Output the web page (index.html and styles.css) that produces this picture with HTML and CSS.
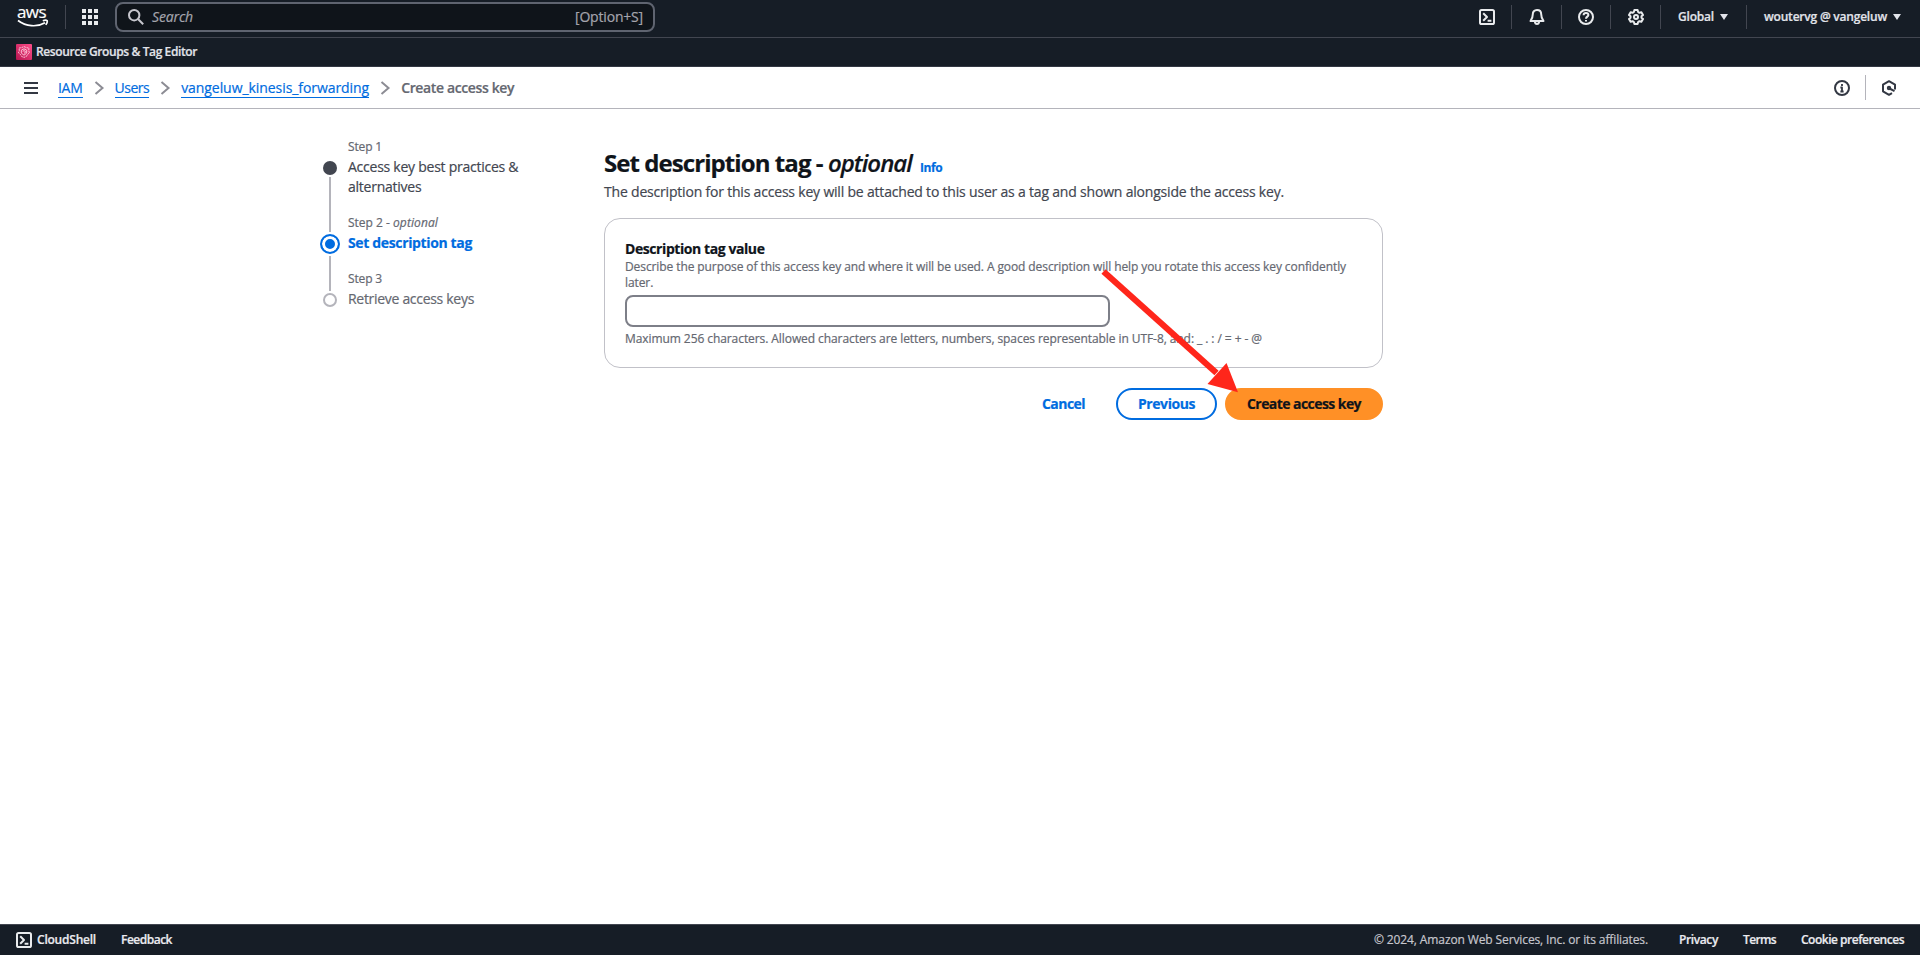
FILE: index.html
```
<!DOCTYPE html>
<html lang="en">
<head>
<meta charset="utf-8">
<title>Create access key | IAM | Global</title>
<link rel="stylesheet" href="styles.css">
</head>
<body>
<svg width="0" height="0" class="defs">
  <symbol id="shell" viewBox="0 0 16 16"><rect x="1" y="1" width="14" height="14" rx="1.6"/><path d="M4.2 4.2 8 8l-3.8 3.8M8.6 11.8h3.8"/></symbol>
  <symbol id="chevron" viewBox="0 0 16 16"><path d="m4.5 2 7 6-7 6"/></symbol>
</svg>

<header class="topnav">
  <a class="logo">
    <span class="logo-text">aws</span>
    <svg class="smile" width="32" height="9" viewBox="0 0 32 9"><path d="M1 1.5c8 6 19 7 27 2.2M25.8 1.7c1.7-.6 3.6-.7 4.2-.1.5.6 0 2.5-1.2 4.3"/></svg>
  </a>
  <i class="sep sep-logo"></i>
  <svg class="apps" width="16" height="16" viewBox="0 0 16 16"><path d="M0 0h4v4H0zM6 0h4v4H6zM12 0h4v4h-4zM0 6h4v4H0zM6 6h4v4H6zM12 6h4v4h-4zM0 12h4v4H0zM6 12h4v4H6zM12 12h4v4h-4z"/></svg>
  <div class="search">
    <svg class="icon" width="16" height="16" viewBox="0 0 16 16"><circle cx="6.2" cy="6.2" r="5.2"/><path d="m10 10 5.2 5.2"/></svg>
    <span class="search-text">Search</span>
    <span class="shortcut">[Option+S]</span>
  </div>
  <nav class="tools">
    <span class="tool"><svg class="icon" width="16" height="16"><use href="#shell"/></svg></span>
    <span class="tool"><svg class="icon" width="16" height="16" viewBox="0 0 16 16"><path d="M8 1C5.200 1 3.800 3 3.800 5.200c0 3.200-.8 4.800-2.300 6.800h13c-1.500-2-2.300-3.600-2.300-6.800C12.200 3 10.800 1 8 1zM5.800 12.300c.2 1.700 1 2.700 2.200 2.700s2-1 2.200-2.700"/></svg></span>
    <span class="tool tool-help"><svg class="icon" width="16" height="16" viewBox="0 0 16 16"><circle cx="8" cy="8" r="7"/><path d="M5.600 6.300c0-1.500 1-2.300 2.400-2.300s2.400.9 2.400 2.100C10.400 7.700 8 7.700 8 9.700M8 10.900v1.700"/></svg></span>
    <span class="tool"><svg class="icon" width="16" height="16" viewBox="0 0 16 16"><circle cx="8" cy="8" r="2"/><path d="M6.400 1h3.200l.5 2 1.300.8 2-.6 1.600 2.700L13.500 7.300v1.400l1.500 1.400-1.600 2.700-2-.6-1.300.8-.5 2H6.400l-.5-2-1.300-.8-2 .6L1 10.100l1.500-1.400V7.300L1 5.900l1.600-2.700 2 .6L5.900 3z"/></svg></span>
    <span class="menu menu-region"><span class="t-global">Global</span><i class="caret"></i></span>
    <span class="menu menu-user"><span class="t-user">woutervg @ vangeluw</span><i class="caret"></i></span>
  </nav>
</header>

<div class="favorites">
  <svg width="16" height="16" viewBox="0 0 16 16"><defs><linearGradient id="pink" x1="0" y1="1" x2="1" y2="0"><stop offset="0" stop-color="#b5144f"/><stop offset="1" stop-color="#ff4f8b"/></linearGradient></defs><rect width="16" height="16" rx="1" fill="url(#pink)"/><g fill="none" stroke="#ffd3e2" stroke-width=".9"><path d="m8 2.600 2.600 1.100 2.300.3-.2 2.800.8 2-2 1.700-1.200 2-2.300.9-2.300-.9-1.200-2-2-1.700.8-2L3.100 4l2.300-.3z" stroke-dasharray="2 .7"/><path d="M5.300 6.200 8 4.800l2.700 1.400v2.900L8 11.200 5.300 9.100z"/><path d="M6.700 7.300 8 6.600l1.300.7v1.200L8 9.300"/></g></svg>
  <span class="t-favorite">Resource Groups &amp; Tag Editor</span>
</div>

<div class="crumbbar">
  <svg class="hamburger" width="14" height="12" viewBox="0 0 14 12"><path d="M0 1h14M0 6h14M0 11h14"/></svg>
  <nav class="crumbs">
    <a class="crumb t-iam">IAM</a>
    <svg class="chev" width="16" height="16"><use href="#chevron"/></svg>
    <a class="crumb t-users">Users</a>
    <svg class="chev" width="16" height="16"><use href="#chevron"/></svg>
    <a class="crumb t-name">vangeluw_kinesis_forwarding</a>
    <svg class="chev" width="16" height="16"><use href="#chevron"/></svg>
    <span class="crumb-current">Create access key</span>
  </nav>
  <div class="panel-tools">
    <svg class="icon dark" width="16" height="16" viewBox="0 0 16 16"><circle cx="8" cy="8" r="7"/><path d="M8 4v2M6.400 7.500H8V12M6.400 11.500h3.200" stroke-width="1.800"/></svg>
    <i class="panel-sep"></i>
    <svg class="icon dark" width="16" height="16" viewBox="0 0 16 16"><path d="M14 9.500V4.700L8 1.200 2 4.700v6.600l6 3.500 3-1.700"/><circle cx="8" cy="8" r="1.200"/><path d="m8.500 8.500 5 2.600"/></svg>
  </div>
</div>

<main class="wizard">
  <ol class="steps">
    <li class="step">
      <div class="marker"><i class="dot dot-done"></i><i class="line"></i></div>
      <div class="step-body"><div class="step-label t-step">Step 1</div><div class="step-title t-best">Access key best practices &amp;<br>alternatives</div></div>
    </li>
    <li class="step step-active">
      <div class="marker"><i class="dot dot-active"></i><i class="line"></i></div>
      <div class="step-body"><div class="step-label">Step 2 - <em>optional</em></div><div class="step-title">Set description tag</div></div>
    </li>
    <li class="step step-next">
      <div class="marker"><i class="dot"></i></div>
      <div class="step-body"><div class="step-label t-step">Step 3</div><div class="step-title">Retrieve access keys</div></div>
    </li>
  </ol>

  <section class="content">
    <h1>Set description tag - <em>optional</em><a class="info">Info</a></h1>
    <p class="lead">The description for this access key will be attached to this user as a tag and shown alongside the access key.</p>
    <div class="card">
      <label class="field-label" for="tag">Description tag value</label>
      <p class="hint">Describe the purpose of this access key and where it will be used. A good description will help you rotate this access key confidently<br>later.</p>
      <input class="input" id="tag" type="text">
      <p class="constraint">Maximum 256 characters. Allowed characters are letters, numbers, spaces representable in UTF-8, and: _ . : / = + - @</p>
    </div>
    <div class="actions">
      <button class="btn btn-link">Cancel</button>
      <button class="btn btn-normal">Previous</button>
      <button class="btn btn-primary">Create access key</button>
    </div>
    <svg class="arrow" width="140" height="130" viewBox="0 0 140 130"><path d="m4.500 3.500 113 101.500" fill="none" stroke="#ff261b" stroke-width="6.200"/><path d="M127.500 95 139 124.300l-30.500-8.300z" fill="#ff261b"/></svg>
  </section>
</main>

<footer class="footer">
  <svg class="icon" width="16" height="16"><use href="#shell"/></svg>
  <span class="t-shell">CloudShell</span>
  <span class="t-feedback">Feedback</span>
  <span class="copyright">© 2024, Amazon Web Services, Inc. or its affiliates.</span>
  <span class="t-privacy">Privacy</span>
  <span class="t-terms">Terms</span>
  <span class="t-cookies">Cookie preferences</span>
</footer>
</body>
</html>
```
FILE: styles.css
```
* { box-sizing: border-box; }
body {
  margin: 0;
  height: 955px;
  display: flex;
  flex-direction: column;
  background: #fff;
  color: #0f141a;
  font: 14px/20px "Open Sans", "Noto Sans", sans-serif;
  white-space: nowrap;
  overflow: hidden;
  -webkit-text-stroke: .2px;
}
h1, p, ol { margin: 0; padding: 0; }
svg { display: block; flex: none; }
.defs { position: absolute; }
.icon { fill: none; stroke: #e9ebed; stroke-width: 2; stroke-linejoin: round; }
.icon.dark { stroke: #333843; }

/* top navigation */
.topnav {
  flex: none;
  height: 38px;
  display: flex;
  align-items: flex-start;
  background: #161d26;
  border-bottom: 1px solid #424650;
  color: #e2e4ea;
}
.logo { width: 65px; height: 37px; padding: 4px 0 0 17px; color: #fff; }
.logo-text { display: block; font-size: 17px; line-height: 16px; letter-spacing: -.6px; font-weight: 500; }
.smile { fill: none; stroke: #fff; stroke-width: 1.700; margin-top: -1px; }
.sep { width: 1px; height: 24px; margin-top: 5px; background: #424650; }
.apps { margin: 9px 17px 0 16px; fill: #e9ebed; }
.search {
  width: 540px;
  height: 30px;
  margin-top: 2px;
  padding: 0 10px 0 11px;
  display: flex;
  align-items: center;
  border: 2px solid #5f6470;
  border-radius: 8px;
  background: #0f141a;
}
.search .icon { stroke: #c6c6cd; }
.search-text { margin-left: 8px; font-style: italic; letter-spacing: -.148px; color: #a4a4ad; }
.shortcut { margin-left: auto; letter-spacing: -.184px; color: #a4a4ad; }
.tools { margin-left: auto; display: flex; padding-top: 5px; height: 30px; font-size: 12px; font-weight: 600; }
.tool { width: 50px; display: flex; justify-content: center; align-items: center; border-right: 1px solid #424650; height: 24px; }
.tool-help { width: 49px; }
.menu { display: flex; align-items: center; height: 24px; }
.menu-region { width: 86px; padding-left: 17px; border-right: 1px solid #424650; }
.menu-user { width: 173px; padding-left: 17px; }
.caret { width: 8px; height: 6px; margin-left: 6px; background: #e2e4ea; clip-path: polygon(0 0, 100% 0, 50% 100%); }
.t-global { letter-spacing: -.193px; }
.t-user { letter-spacing: -.208px; }

.favorites {
  flex: none;
  height: 29px;
  display: flex;
  align-items: center;
  gap: 4px;
  padding-left: 16px;
  background: #161d26;
  border-bottom: 1px solid #333843;
  color: #e2e4ea;
  font-size: 12px;
  font-weight: 600;
}
.t-favorite { letter-spacing: -.395px; }

/* breadcrumb bar */
.crumbbar {
  flex: none;
  height: 42px;
  display: flex;
  align-items: center;
  padding: 0 23px 0 24px;
  border-bottom: 1px solid #b4b4bb;
}
.hamburger { stroke: #333843; stroke-width: 2; }
.crumbs { display: flex; align-items: center; margin-left: 20px; }
.crumb { color: #006ce0; border-bottom: 1px solid #006ce0; line-height: 19px; }
.t-iam { letter-spacing: -.286px; }
.t-users { letter-spacing: -.5px; }
.t-name { letter-spacing: -.065px; }
.crumb-current { color: #656871; font-weight: 600; letter-spacing: -.369px; }
.chev { margin: 0 8px; fill: none; stroke: #8c8c94; stroke-width: 2; }
.panel-tools { margin-left: auto; display: flex; align-items: center; }
.panel-sep { width: 1px; height: 25px; margin: 0 15px; background: #b4b4bb; }

/* wizard */
.wizard { flex: 1; display: flex; padding-left: 320px; }
.steps { width: 284px; padding-top: 30px; list-style: none; }
.step { display: flex; gap: 8px; }
.marker { width: 20px; padding-top: 22px; display: flex; flex-direction: column; align-items: center; }
.dot { flex: none; width: 14px; height: 14px; border-radius: 50%; border: 2px solid #b4b4bb; }
.dot-done { border: 0; background: #424650; }
.dot-active { width: 20px; height: 20px; border: 2px solid #006ce0; background: #006ce0; box-shadow: inset 0 0 0 3px #fff; }
.step-active .marker { padding-top: 19px; }
.line { flex: 1; width: 2px; margin: 2px 0 -17px; background: #b4b4bb; }
.step-active .line { margin-bottom: -20px; }
.step-body { padding-bottom: 18px; }
.step-label { font-size: 12px; line-height: 16px; margin-bottom: 2px; color: #656871; }
.step-label em { letter-spacing: .1px; }
.t-step { letter-spacing: -.154px; }
.step-title { color: #424650; letter-spacing: -.25px; }
.step-active .step-title { color: #006ce0; font-weight: 700; letter-spacing: -.357px; }
.step-next .step-title { color: #656871; letter-spacing: -.302px; }

.content { position: relative; width: 779px; padding-top: 39px; }
h1 { height: 30px; font-size: 24px; line-height: 30px; font-weight: 700; letter-spacing: -.93px; }
h1 em { font-weight: 600; letter-spacing: -.977px; }
.info { margin-left: 8px; font-size: 12px; line-height: 12px; letter-spacing: -.359px; color: #006ce0; }
.lead { margin-top: 4px; letter-spacing: -.195px; color: #424650; }
.card { height: 150px; margin-top: 16px; padding: 20px; border: 1px solid #c1c1c8; border-radius: 16px; }
.field-label { display: block; font-weight: 700; letter-spacing: -.423px; }
.hint { font-size: 12px; line-height: 16px; letter-spacing: -.091px; color: #656871; }
.input { display: block; width: 485px; height: 32px; margin: 4px 0; border: 2px solid #7d7f88; border-radius: 8px; background: #fff; }
.constraint { font-size: 12px; line-height: 16px; letter-spacing: -.077px; color: #656871; }
.actions { display: flex; justify-content: flex-end; margin-top: 20px; }
.btn {
  height: 32px;
  padding: 0;
  border: 2px solid transparent;
  border-radius: 16px;
  background: none;
  font: 700 14px/20px "Open Sans", "Noto Sans", sans-serif;
  color: #006ce0;
}
.btn-link { width: 79px; margin-right: 13px; letter-spacing: -.555px; }
.btn-normal { width: 101px; margin-right: 8px; border-color: #006ce0; letter-spacing: -.436px; }
.btn-primary { width: 158px; background: #ff9026; border-color: #ff9026; color: #0f141a; letter-spacing: -.564px; }
.arrow { position: absolute; left: 495px; top: 159px; }

/* footer */
.footer {
  flex: none;
  height: 31px;
  display: flex;
  align-items: center;
  padding: 0 16px;
  background: #161d26;
  border-top: 1px solid #424650;
  color: #ebebf0;
  font-size: 12px;
  font-weight: 600;
}
.t-shell { margin-left: 5px; letter-spacing: -.22px; }
.t-feedback { margin-left: 25px; letter-spacing: -.496px; }
.copyright { margin-left: auto; font-weight: 400; letter-spacing: -.114px; color: #c6c6cd; }
.t-privacy { margin-left: 31px; letter-spacing: -.379px; }
.t-terms { margin-left: 25px; letter-spacing: -.634px; }
.t-cookies { margin-left: 25px; letter-spacing: -.487px; }
```
